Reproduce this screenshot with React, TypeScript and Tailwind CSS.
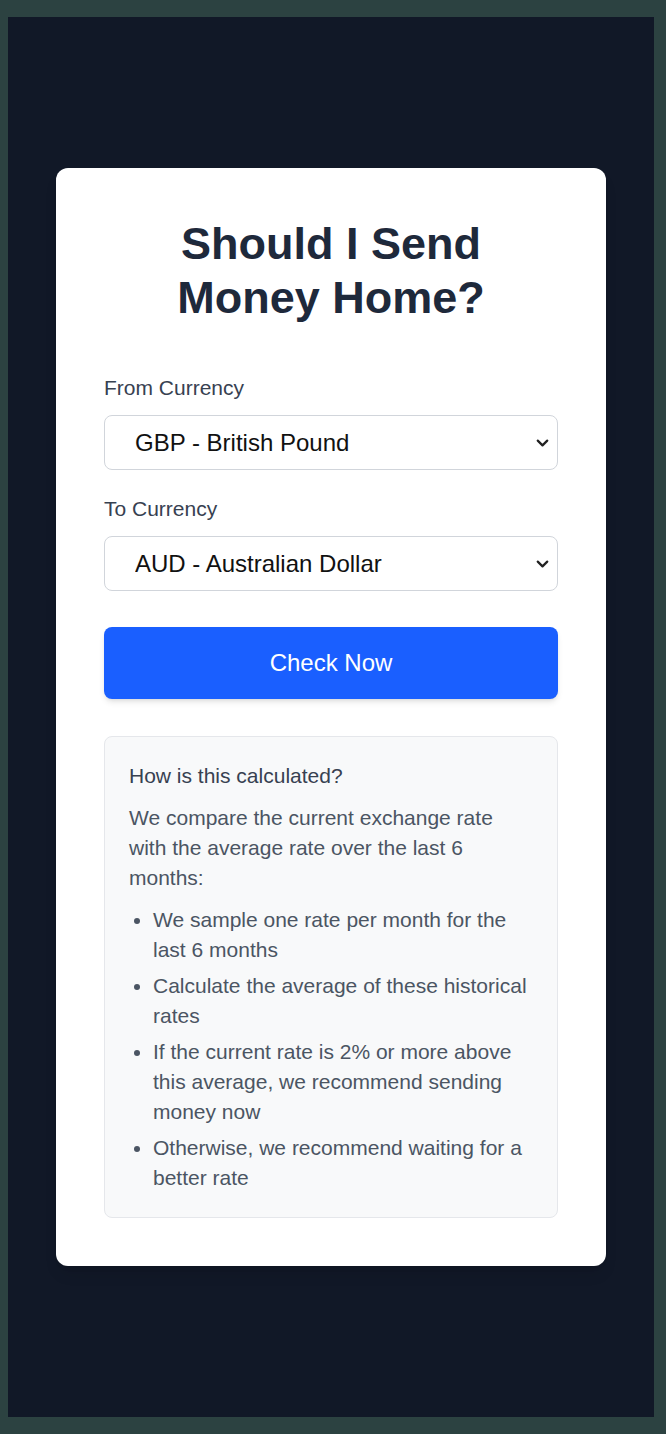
import { ChevronDown } from "lucide-react";
import type { ReactNode } from "react";

const currencies = [
  { code: "GBP", name: "British Pound" },
  { code: "AUD", name: "Australian Dollar" },
  { code: "USD", name: "US Dollar" },
  { code: "EUR", name: "Euro" },
];

function CurrencySelect({ label, value }: { label: string; value: string }) {
  return (
    <div className="flex flex-col gap-3">
      <label className="text-[21px] leading-[30px] text-[#374151]">{label}</label>
      <div className="relative">
        <select
          defaultValue={value}
          className="h-[55px] w-full appearance-none rounded-lg border border-[#d1d5db] bg-white pl-[30px] pr-10 text-[24px] text-[#111111] outline-none"
        >
          {currencies.map((c) => (
            <option key={c.code} value={c.code}>
              {c.code} - {c.name}
            </option>
          ))}
        </select>
        <ChevronDown
          className="pointer-events-none absolute right-[6px] top-1/2 size-[19px] -translate-y-1/2 text-[#222222]"
          strokeWidth={2.8}
        />
      </div>
    </div>
  );
}

function Bullet({ children }: { children: ReactNode }) {
  return <li>{children}</li>;
}

export default function App() {
  return (
    <div
      className="h-[1434px] w-full bg-[#2c4241] pb-[17px] pl-2 pr-[12px] pt-[17px]"
      style={{ fontFamily: '"Liberation Sans", Arial, sans-serif' }}
    >
      <div className="flex h-full items-center justify-center bg-[#111827]">
        <div className="w-[550px] rounded-xl bg-white px-12 pb-12 pt-[49px] shadow-lg">
          <h1 className="text-center text-[45px] font-bold leading-[54px] text-[#1e293b]">
            Should I Send
            <br />
            Money Home?
          </h1>

          <div className="mt-12 flex flex-col gap-6">
            <CurrencySelect label="From Currency" value="GBP" />
            <CurrencySelect label="To Currency" value="AUD" />
          </div>

          <button className="mt-[36px] h-[72px] w-full rounded-lg bg-[#1a5fff] text-[24px] text-white shadow-md">
            Check Now
          </button>

          <div className="mt-[37px] rounded-lg border border-[#e5e7eb] bg-[#f8f9fa] p-6 text-[21px] leading-[30px]">
            <h3 className="text-[#374151]">How is this calculated?</h3>
            <p className="mt-3 text-[#4b5563]">
              We compare the current exchange rate with the average rate over the last 6 months:
            </p>
            <ul className="mt-3 flex list-disc flex-col gap-1.5 pl-6 text-[#4b5563]">
              <Bullet>We sample one rate per month for the last 6 months</Bullet>
              <Bullet>Calculate the average of these historical rates</Bullet>
              <Bullet>
                If the current rate is 2% or more above this average, we recommend sending money now
              </Bullet>
              <Bullet>Otherwise, we recommend waiting for a better rate</Bullet>
            </ul>
          </div>
        </div>
      </div>
    </div>
  );
}
